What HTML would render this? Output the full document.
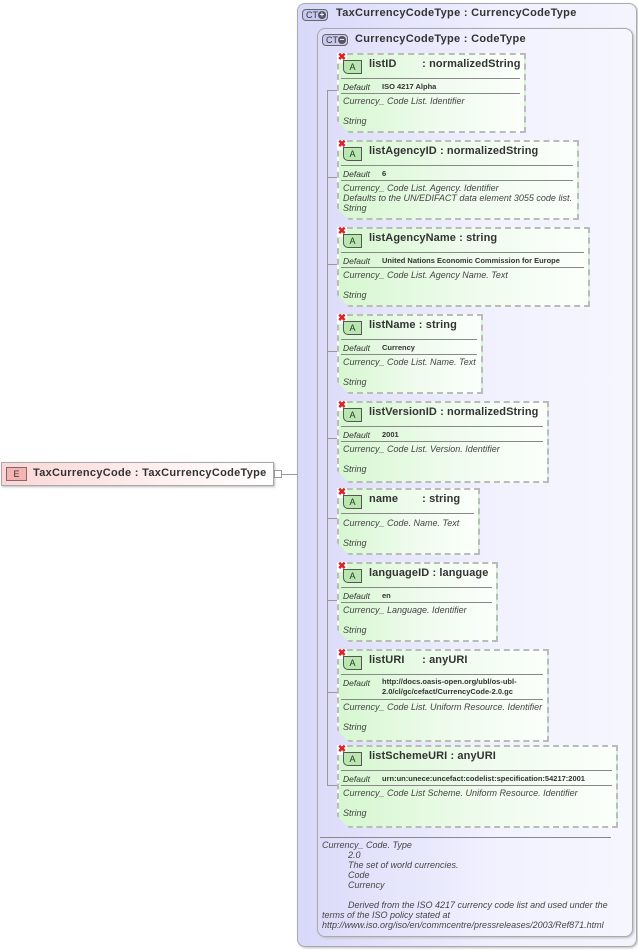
<!DOCTYPE html>
<html><head><meta charset="utf-8"><style>
*{margin:0;padding:0;box-sizing:border-box}
body{width:638px;height:950px;background:#fff;position:relative;overflow:hidden;font-family:"Liberation Sans",sans-serif;color:#333}
.abs{position:absolute}
.outer{left:297px;top:3px;width:340px;height:944px;border:1px solid #aaa;border-radius:8px;background:linear-gradient(90deg,#d8d8fa,#f0f0ff 60%,#f4f4ff);box-shadow:1px 1px 2px #bbb}
.inner{left:317px;top:28px;width:316px;height:909px;border:1px solid #aaa;border-radius:8px;background:linear-gradient(90deg,#dcdcfa,#f2f2ff 60%,#f6f6ff);box-shadow:1px 1px 2px #bbb}
.ct{position:absolute;border:1px solid #666;border-radius:4px;background:#c8c8f0;font-size:9px;height:12px;width:26px;line-height:10px;padding-left:3px;color:#333}
.ct i{position:absolute;right:1px;top:1px;width:8px;height:8px;border-radius:50%;background:#556;color:#fff;font-style:normal;font-size:8px;line-height:8px;text-align:center;font-weight:bold}
.h{font-size:11px;font-weight:bold;color:#333;letter-spacing:0.3px}
.box{position:absolute;left:337px;border:2px dashed #bbb;background:linear-gradient(90deg,#d6f7d0,#eefbec 50%,#fbfffb);clip-path:polygon(0 0,100% 0,100% 100%,12px 100%,0 calc(100% - 12px))}
.x{position:absolute;left:-2px;top:-2px;width:10px;height:10px;background:#fff;color:#d22;font-size:10px;line-height:10px;text-align:center;font-weight:bold}
.a{position:absolute;left:4px;top:5px;width:19px;height:14px;border:1px solid #555;border-radius:0 0 0 5px;background:#b8e8b0;font-size:9px;text-align:center;line-height:13px;color:#333}
.t{position:absolute;left:30px;top:3px;font-size:11px;font-weight:bold;white-space:nowrap;letter-spacing:0.1px}
.t span{display:inline-block;min-width:50px}
.l{position:absolute;left:2px;right:4px;height:1px;background:#888}
.d{position:absolute;left:4px;font-size:8.5px;font-style:italic}
.v{position:absolute;left:43px;font-size:7.5px;font-weight:bold;line-height:10px;white-space:nowrap}
.s{position:absolute;left:4px;font-size:9px;font-style:italic;line-height:10px;white-space:nowrap;color:#444}
.ln{position:absolute;background:#999}
</style></head><body>
<div class="abs" style="left:1px;top:462px;width:273px;height:24px;border:1px solid #aaa;background:linear-gradient(90deg,#fbd6d6,#fff0f0 60%,#fff);box-shadow:1px 1px 2px #bbb"></div>
<div class="abs" style="left:6px;top:467px;width:21px;height:14px;border:1px solid #866;background:#f4b4b4;font-size:9px;text-align:center;line-height:13px">E</div>
<div class="abs h" style="left:33px;top:467px">TaxCurrencyCode : TaxCurrencyCodeType</div>
<div class="abs" style="left:274px;top:470px;width:8px;height:8px;border:1px solid #999;background:#fff"></div>
<div class="ln" style="left:282px;top:474px;width:45px;height:1px"></div>

<div class="abs outer"></div>
<div class="ct" style="left:302px;top:9px">CT<i>+</i></div>
<div class="abs h" style="left:336px;top:7px">TaxCurrencyCodeType : CurrencyCodeType</div>
<div class="abs inner"></div>
<div class="ct" style="left:322px;top:34px">CT<i>−</i></div>
<div class="abs h" style="left:355px;top:33px">CurrencyCodeType : CodeType</div>

<div class="ln" style="left:327px;top:90px;width:1px;height:696px"></div>
<div class="ln" style="left:327px;top:90px;width:10px;height:1px"></div>
<div class="ln" style="left:327px;top:177px;width:10px;height:1px"></div>
<div class="ln" style="left:327px;top:264px;width:10px;height:1px"></div>
<div class="ln" style="left:327px;top:351px;width:10px;height:1px"></div>
<div class="ln" style="left:327px;top:438px;width:10px;height:1px"></div>
<div class="ln" style="left:327px;top:518px;width:10px;height:1px"></div>
<div class="ln" style="left:327px;top:600px;width:10px;height:1px"></div>
<div class="ln" style="left:327px;top:692px;width:10px;height:1px"></div>
<div class="ln" style="left:327px;top:785px;width:10px;height:1px"></div>

<div class="box" style="top:53px;width:189px;height:80px"><div class="x">✖</div><div class="a">A</div><div class="t"><span>listID</span> : normalizedString</div><div class="l" style="top:23px"></div><div class="d" style="top:27px">Default</div><div class="v" style="top:27px">ISO 4217 Alpha</div><div class="l" style="top:38px"></div><div class="s" style="top:41px">Currency_ Code List. Identifier<br><br>String</div></div>

<div class="box" style="top:140px;width:242px;height:80px"><div class="x">✖</div><div class="a">A</div><div class="t">listAgencyID : normalizedString</div><div class="l" style="top:23px"></div><div class="d" style="top:27px">Default</div><div class="v" style="top:27px">6</div><div class="l" style="top:38px"></div><div class="s" style="top:41px">Currency_ Code List. Agency. Identifier<br>Defaults to the UN/EDIFACT data element 3055 code list.<br>String</div></div>

<div class="box" style="top:227px;width:253px;height:80px"><div class="x">✖</div><div class="a">A</div><div class="t">listAgencyName : string</div><div class="l" style="top:23px"></div><div class="d" style="top:27px">Default</div><div class="v" style="top:27px">United Nations Economic Commission for Europe</div><div class="l" style="top:38px"></div><div class="s" style="top:41px">Currency_ Code List. Agency Name. Text<br><br>String</div></div>

<div class="box" style="top:314px;width:146px;height:80px"><div class="x">✖</div><div class="a">A</div><div class="t">listName : string</div><div class="l" style="top:23px"></div><div class="d" style="top:27px">Default</div><div class="v" style="top:27px">Currency</div><div class="l" style="top:38px"></div><div class="s" style="top:41px">Currency_ Code List. Name. Text<br><br>String</div></div>

<div class="box" style="top:401px;width:212px;height:82px"><div class="x">✖</div><div class="a">A</div><div class="t">listVersionID : normalizedString</div><div class="l" style="top:23px"></div><div class="d" style="top:27px">Default</div><div class="v" style="top:27px">2001</div><div class="l" style="top:38px"></div><div class="s" style="top:41px">Currency_ Code List. Version. Identifier<br><br>String</div></div>

<div class="box" style="top:488px;width:143px;height:67px"><div class="x">✖</div><div class="a">A</div><div class="t"><span>name</span> : string</div><div class="l" style="top:23px"></div><div class="s" style="top:28px">Currency_ Code. Name. Text<br><br>String</div></div>

<div class="box" style="top:562px;width:161px;height:80px"><div class="x">✖</div><div class="a">A</div><div class="t">languageID : language</div><div class="l" style="top:23px"></div><div class="d" style="top:27px">Default</div><div class="v" style="top:27px">en</div><div class="l" style="top:38px"></div><div class="s" style="top:41px">Currency_ Language. Identifier<br><br>String</div></div>

<div class="box" style="top:649px;width:212px;height:93px"><div class="x">✖</div><div class="a">A</div><div class="t"><span>listURI</span> : anyURI</div><div class="l" style="top:23px"></div><div class="d" style="top:27px">Default</div><div class="v" style="top:26px">http://docs.oasis-open.org/ubl/os-ubl-<br>2.0/cl/gc/cefact/CurrencyCode-2.0.gc</div><div class="l" style="top:48px"></div><div class="s" style="top:51px">Currency_ Code List. Uniform Resource. Identifier<br><br>String</div></div>

<div class="box" style="top:745px;width:281px;height:83px"><div class="x">✖</div><div class="a">A</div><div class="t">listSchemeURI : anyURI</div><div class="l" style="top:23px"></div><div class="d" style="top:27px">Default</div><div class="v" style="top:27px">urn:un:unece:uncefact:codelist:specification:54217:2001</div><div class="l" style="top:38px"></div><div class="s" style="top:41px">Currency_ Code List Scheme. Uniform Resource. Identifier<br><br>String</div></div>

<div class="ln" style="left:320px;top:837px;width:291px;height:1px;background:#888"></div>
<div class="abs s" style="left:322px;top:840px">Currency_ Code. Type<br><span style="padding-left:26px">2.0</span><br><span style="padding-left:26px">The set of world currencies.</span><br><span style="padding-left:26px">Code</span><br><span style="padding-left:26px">Currency</span><br><br><span style="padding-left:26px">Derived from the ISO 4217 currency code list and used under the</span><br>terms of the ISO policy stated at<br>http://www.iso.org/iso/en/commcentre/pressreleases/2003/Ref871.html</div>
</body></html>
